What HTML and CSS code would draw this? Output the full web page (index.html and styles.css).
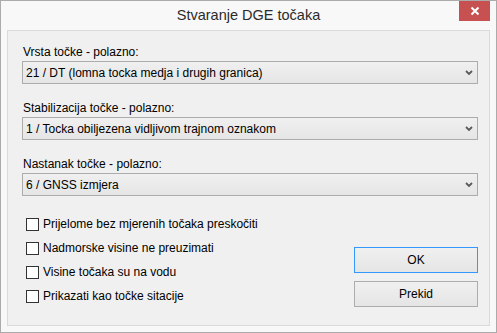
FILE: index.html
```html
<!DOCTYPE html>
<html>
<head>
   <meta charset="UTF-8">
   <link rel="stylesheet" href="styles.css">
</head>
<body>
<div class="window">
   <div class="titlebar">
      Stvaranje DGE točaka
      <div class="close-btn">
         <svg width="10" height="10" viewBox="0 0 10 10">
            <path d="M1.5 1.5 L8.5 8.5 M8.5 1.5 L1.5 8.5" stroke="#fff" stroke-width="2"/>
         </svg>
      </div>
   </div>

   <div class="client">
      <div class="field">
         <div class="label">Vrsta točke - polazno:</div>
         <div class="combo">
            <span>21 / DT (lomna tocka medja i drugih granica)</span>
            <svg class="arrow" width="8" height="6" viewBox="0 0 8 6">
               <path d="M1 1 L4 4 L7 1" stroke="#5a5a5a" stroke-width="1.8" fill="none"/>
            </svg>
         </div>
      </div>

      <div class="field">
         <div class="label">Stabilizacija točke - polazno:</div>
         <div class="combo">
            <span>1 / Tocka obiljezena vidljivom trajnom oznakom</span>
            <svg class="arrow" width="8" height="6" viewBox="0 0 8 6">
               <path d="M1 1 L4 4 L7 1" stroke="#5a5a5a" stroke-width="1.8" fill="none"/>
            </svg>
         </div>
      </div>

      <div class="field">
         <div class="label">Nastanak točke - polazno:</div>
         <div class="combo">
            <span>6 / GNSS izmjera</span>
            <svg class="arrow" width="8" height="6" viewBox="0 0 8 6">
               <path d="M1 1 L4 4 L7 1" stroke="#5a5a5a" stroke-width="1.8" fill="none"/>
            </svg>
         </div>
      </div>

      <div class="bottom">
         <div class="checks">
            <div class="check"><span class="box"></span>Prijelome bez mjerenih točaka preskočiti</div>
            <div class="check"><span class="box"></span>Nadmorske visine ne preuzimati</div>
            <div class="check"><span class="box"></span>Visine točaka su na vodu</div>
            <div class="check"><span class="box"></span>Prikazati kao točke sitacije</div>
         </div>
         <div class="buttons">
            <div class="btn default">OK</div>
            <div class="btn">Prekid</div>
         </div>
      </div>
   </div>
</div>
</body>
</html>
```

FILE: styles.css
```css
html, body {
   margin: 0;
   padding: 0;
   background: #ffffff;
}

.window {
   width: 497px;
   height: 333px;
   box-sizing: border-box;
   border: 1px solid #ababab;
   background: #f8f8f8;
   position: relative;
   display: flex;
   flex-direction: column;
}

.titlebar {
   height: 29px;
   text-align: center;
   font-family: "Liberation Sans", Arial, sans-serif;
   font-size: 14.5px;
   line-height: 29px;
   color: #2b2b2b;
}

.close-btn {
   position: absolute;
   top: 0;
   right: 6px;
   width: 31px;
   height: 20px;
   background: #c75050;
   display: flex;
   align-items: center;
   justify-content: center;
}

.client {
   flex: 1;
   margin: 0 6px 6px 6px;
   border: 1px solid #dadada;
   background: #f0f0f0;
   padding: 14px 11px 0 14px;
   font-family: "Liberation Sans", Arial, sans-serif;
   font-size: 12px;
   color: #000;
}

.field {
   margin-bottom: 17px;
}

.label {
   line-height: 15px;
   padding-left: 1px;
   margin-bottom: 1px;
}

.combo {
   height: 23px;
   box-sizing: border-box;
   border: 1px solid #acacac;
   background: linear-gradient(#f0f0f0, #e5e5e5);
   display: flex;
   align-items: center;
   justify-content: space-between;
   padding: 0 4px 0 3px;
}

.bottom {
   display: flex;
   justify-content: space-between;
}

.checks {
   padding-left: 4px;
   padding-top: 5px;
}

.check {
   height: 24px;
   line-height: 13px;
   display: flex;
   align-items: flex-start;
}

.check .box {
   width: 13px;
   height: 13px;
   box-sizing: border-box;
   border: 1px solid #333;
   background: #fff;
   margin-right: 4px;
}

.buttons {
   padding-top: 34px;
   width: 124px;
}

.btn {
   height: 26px;
   box-sizing: border-box;
   border: 1px solid #adadad;
   background: linear-gradient(#f0f0f0, #e5e5e5);
   text-align: center;
   line-height: 24px;
   margin-bottom: 8px;
}

.btn.default {
   border-color: #3399ff;
}
```
